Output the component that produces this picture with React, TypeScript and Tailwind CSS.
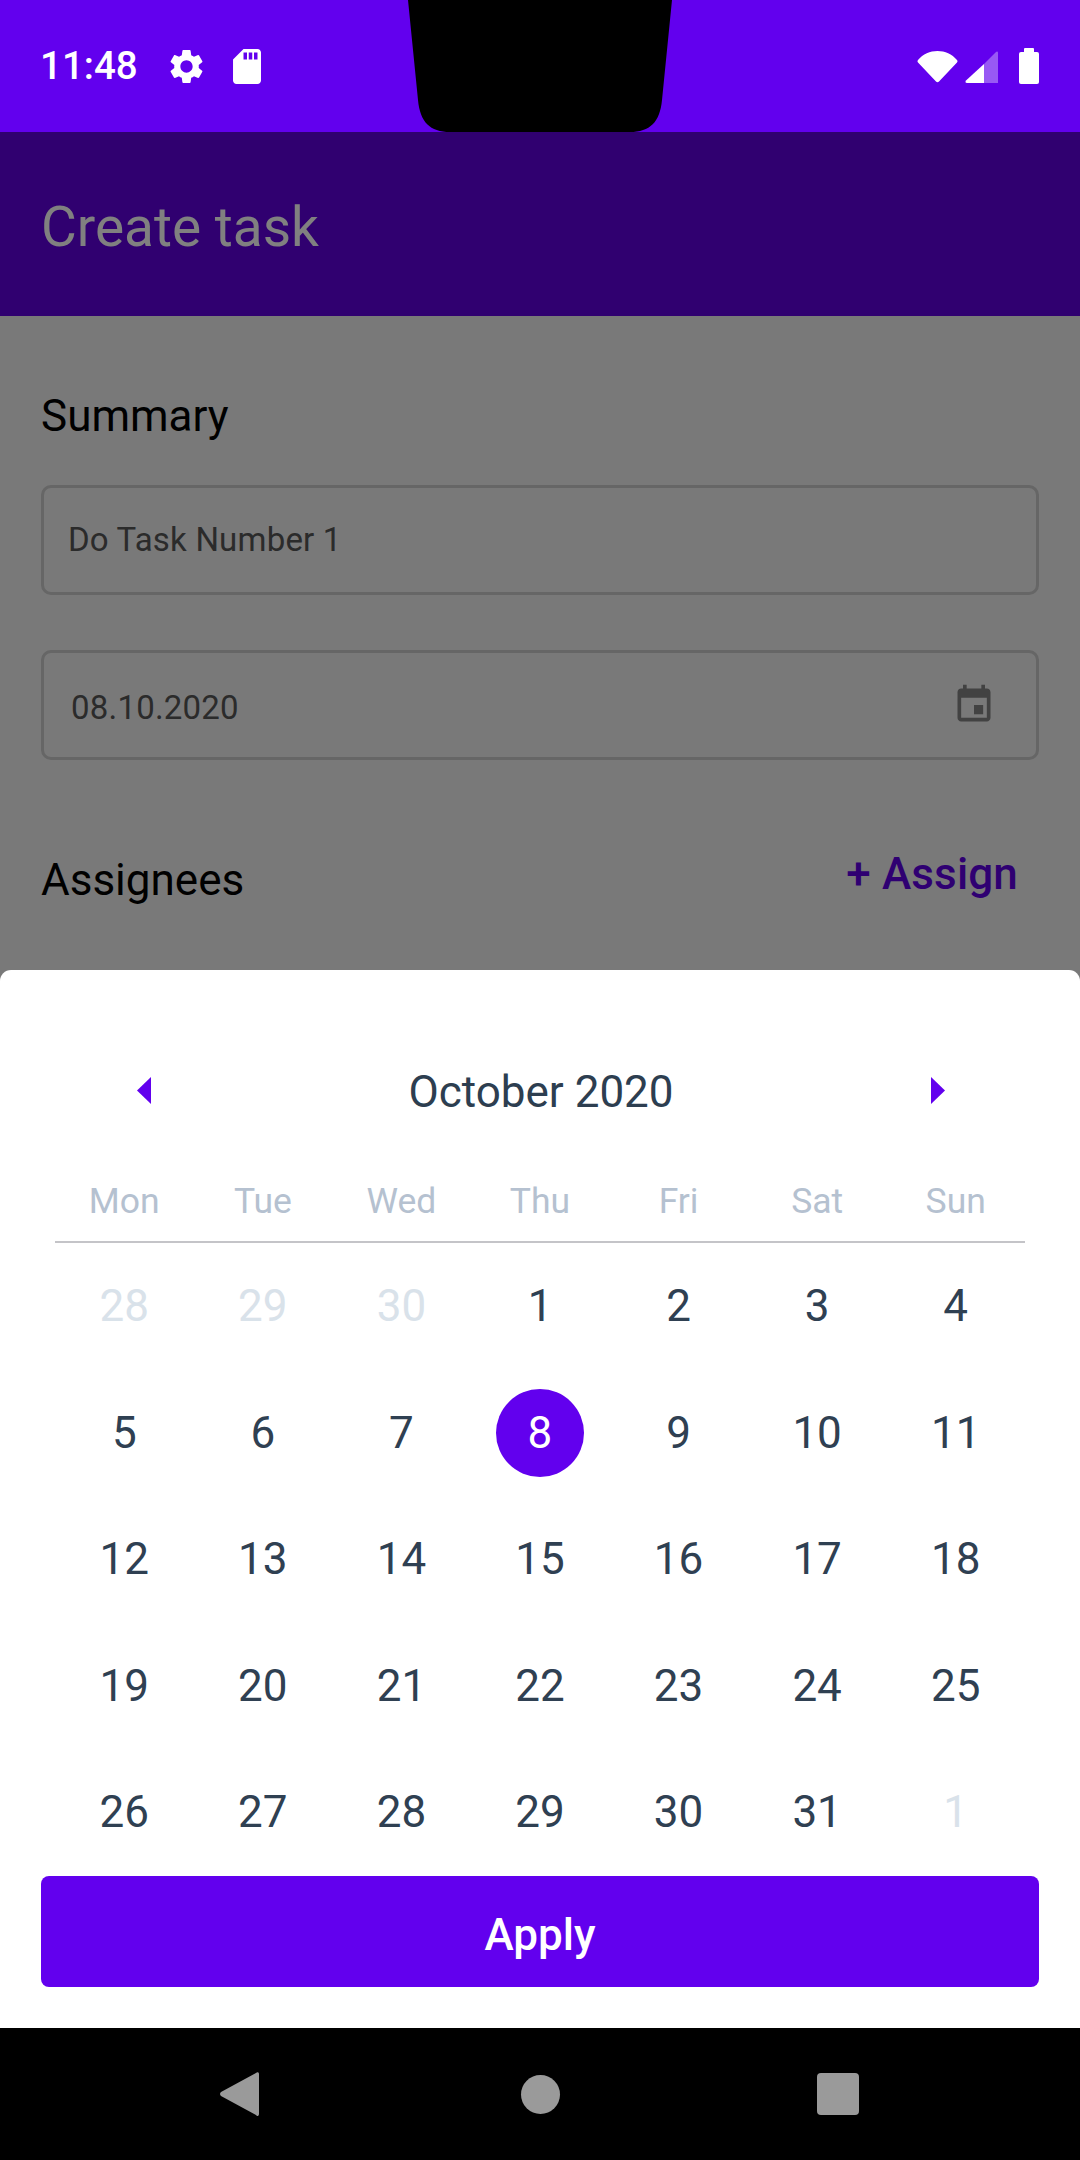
import React from 'react';

const weekDays = ['Mon', 'Tue', 'Wed', 'Thu', 'Fri', 'Sat', 'Sun'];

const days = [
  { label: 28, muted: true },
  { label: 29, muted: true },
  { label: 30, muted: true },
  ...Array.from({ length: 31 }, (_, i) => ({ label: i + 1, muted: false })),
  { label: 1, muted: true },
];

const StatusBar = () => (
  <div className="relative h-[132px] shrink-0 bg-[#6200ee] flex items-center justify-between pl-[40px] pr-[41px]">
    <div className="flex items-center">
      <span className="w-[126px] text-[38.5px] leading-[44px] font-medium text-white">11:48</span>
      <svg viewBox="0 0 24 24" className="w-[41px] h-[41px] fill-white">
        <path d="M19.14 12.94c.04-.3.06-.61.06-.94 0-.32-.02-.64-.07-.94l2.03-1.58a.49.49 0 0 0 .12-.61l-1.92-3.32a.488.488 0 0 0-.59-.22l-2.39.96c-.5-.38-1.03-.7-1.62-.94l-.36-2.54a.484.484 0 0 0-.48-.41h-3.84c-.24 0-.43.17-.47.41l-.36 2.54c-.59.24-1.13.57-1.62.94l-2.39-.96c-.22-.08-.47 0-.59.22L2.74 8.87c-.12.21-.08.47.12.61l2.03 1.58c-.05.3-.09.63-.09.94s.02.64.07.94l-2.03 1.58a.49.49 0 0 0-.12.61l1.92 3.32c.12.22.37.29.59.22l2.39-.96c.5.38 1.03.7 1.62.94l.36 2.54c.05.24.24.41.48.41h3.84c.24 0 .44-.17.47-.41l.36-2.54c.59-.24 1.13-.56 1.62-.94l2.39.96c.22.08.47 0 .59-.22l1.92-3.32c.12-.22.07-.47-.12-.61l-2.01-1.58zM12 15.6c-1.98 0-3.6-1.62-3.6-3.6s1.62-3.6 3.6-3.6 3.6 1.62 3.6 3.6-1.62 3.6-3.6 3.6z" />
      </svg>
      <svg viewBox="4 2 16 20" className="ml-[26px] w-[28px] h-[35px] fill-white">
        <path d="M18 2h-8L4.02 8 4 20c0 1.1.9 2 2 2h12c1.1 0 2-.9 2-2V4c0-1.1-.9-2-2-2zm-6 6h-2V4h2v4zm3 0h-2V4h2v4zm3 0h-2V4h2v4z" />
      </svg>
    </div>

    {/* camera notch */}
    <svg viewBox="0 0 264 132" className="absolute left-[408px] top-0 w-[264px] h-[132px]">
      <path d="M0 0H264L254 100C252 122 242 132 222 132H42C22 132 12 122 10 100Z" fill="#000" />
    </svg>

    <div className="flex items-center">
      <svg viewBox="0 0 41 33" className="w-[41px] h-[33px] fill-white">
        <path d="M1 10C6 4 13 1 20.5 1S35 4 40 10c.7.9.7 1.6 0 2.5L22 31.5c-.9 1-2.1 1-3 0L1 12.5C.3 11.6.3 10.9 1 10Z" />
      </svg>
      <svg viewBox="0 0 33 33" className="ml-[7px] w-[33px] h-[33px]">
        <path d="M19 14V33H2C.4 33 0 31.8 1 30.5Z" fill="#fff" />
        <path d="M19 14 31 2C32 1 33 1.5 33 3V33H19Z" fill="#fff" fillOpacity="0.35" />
      </svg>
      <div className="ml-[21px] flex flex-col items-center">
        <div className="w-[10px] h-[4px] bg-white rounded-t-[1px]" />
        <div className="w-[20px] h-[32px] bg-white rounded-[2px]" />
      </div>
    </div>
  </div>
);

const Field = ({
  value,
  className,
  textClassName,
  children,
}: {
  value: string;
  className: string;
  textClassName?: string;
  children?: React.ReactNode;
}) => (
  <div className={`h-[110px] flex items-center justify-between border-[3px] border-[#666666] rounded-[10px] pr-[40px] ${className}`}>
    <span className={`text-[33px] leading-[40px] tracking-[0.2px] text-[#2b2b2b] ${textClassName ?? ''}`}>{value}</span>
    {children}
  </div>
);

const TaskForm = () => (
  <div className="flex-1 bg-[#797979] px-[41px] overflow-hidden">
    <div className="pt-[76px] text-[44px] leading-[48px] text-black">Summary</div>
    <Field value="Do Task Number 1" className="mt-[45px] pl-[24px]" />
    <Field value="08.10.2020" className="mt-[55px] pl-[27px]" textClassName="mt-[5px]">
      <svg viewBox="0 0 24 24" className="w-[44px] h-[44px] fill-[#424242]">
        <path d="M17 12h-5v5h5v-5zM16 1v2H8V1H6v2H5c-1.11 0-1.99.9-1.99 2L3 19c0 1.1.89 2 2 2h14c1.1 0 2-.9 2-2V5c0-1.1-.9-2-2-2h-1V1h-2zm3 18H5V8h14v11z" />
      </svg>
    </Field>
    <div className="mt-[90px] flex items-start justify-between pr-[21px]">
      <span className="mt-[6px] text-[44px] leading-[48px] text-black">Assignees</span>
      <span className="text-[44px] leading-[48px] tracking-[0.15px] font-medium text-[#2f0072]">+ Assign</span>
    </div>
  </div>
);

const Calendar = () => (
  <div className="px-[55px]">
    <div className="h-[62px] flex items-center justify-between pl-[82px] pr-[80px]">
      <svg viewBox="0 0 14 27" className="-mt-[2px] w-[14px] h-[27px] fill-[#6200ee]">
        <path d="M14 0V27L0 13.5Z" />
      </svg>
      <span className="mt-[1px] text-[44px] leading-[50px] text-[#2d3e50]">October 2020</span>
      <svg viewBox="0 0 14 27" className="-mt-[2px] w-[14px] h-[27px] fill-[#6200ee]">
        <path d="M0 0V27L14 13.5Z" />
      </svg>
    </div>
    <div className="mt-[59px] h-[62px] grid grid-cols-7 border-b-2 border-[#c4c4c8]">
      {weekDays.map((d) => (
        <div key={d} className="text-center text-[35.5px] leading-[40px] text-[#b5c1d0]">
          {d}
        </div>
      ))}
    </div>
    <div className="grid grid-cols-7 auto-rows-[126.5px]">
      {days.map((d, i) => (
        <div key={i} className="flex items-center justify-center">
          {d.label === 8 && !d.muted ? (
            <span className="w-[88px] h-[88px] rounded-full bg-[#6200ee] flex items-center justify-center text-[44px] text-white">
              8
            </span>
          ) : (
            <span className={`text-[44px] leading-[48px] ${d.muted ? 'text-[#d9e2ea]' : 'text-[#2f4052]'}`}>
              {d.label}
            </span>
          )}
        </div>
      ))}
    </div>
  </div>
);

const BottomSheet = () => (
  <div className="h-[1058px] shrink-0 -mt-[11px] bg-white rounded-t-[11px] flex flex-col overflow-hidden">
    <div className="pt-[90px] flex-1 overflow-hidden">
      <Calendar />
    </div>
    <div className="px-[41px] pb-[41px] shrink-0">
      <button className="w-full h-[111px] pt-[6px] bg-[#6200ee] rounded-[8px] text-[44px] font-medium text-white">Apply</button>
    </div>
  </div>
);

const NavBar = () => (
  <div className="h-[132px] shrink-0 bg-black flex items-center">
    <svg viewBox="0 0 40 46" className="ml-[220px] w-[40px] h-[46px] fill-[#9a9a9a]">
      <path d="M39 3V43C39 45 37 46 36 44L1 25C-.3 24 -.3 22 1 21L36 2C37 1 39 1 39 3Z" />
    </svg>
    <div className="ml-[261px] w-[39px] h-[39px] rounded-full bg-[#9a9a9a]" />
    <div className="ml-[257px] w-[42px] h-[42px] rounded-[4px] bg-[#9a9a9a]" />
  </div>
);

const App = () => {
  return (
    <div className="w-[1080px] h-[2160px] flex flex-col overflow-hidden font-['Roboto',sans-serif]">
      <StatusBar />
      <div className="h-[184px] shrink-0 bg-[#300070] flex items-center pl-[41px]">
        <h1 className="mt-[5px] text-[55px] leading-[64px] text-[#808080]">Create task</h1>
      </div>
      <TaskForm />
      <BottomSheet />
      <NavBar />
    </div>
  );
};

export default App;
